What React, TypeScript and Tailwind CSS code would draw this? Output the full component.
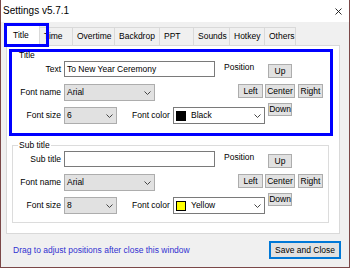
import React from 'react';

const Chevron = () => (
  <svg width="7" height="4" viewBox="0 0 7 4" className="shrink-0">
    <polyline points="0.5,0.5 3.5,3.5 6.5,0.5" fill="none" stroke="#444444" strokeWidth="1" />
  </svg>
);

const Btn = ({ label, className }: { label: string; className: string }) => (
  <div className={`flex items-center justify-center bg-[#e1e1e1] border border-[#adadad] ${className}`}>
    {label}
  </div>
);

interface GroupProps {
  title: string;
  first: string;
  value: string;
  size: string;
  colorName: string;
  swatch: string;
  frame: string;
  legend: string;
}

const Group: React.FC<GroupProps> = ({ title, first, value, size, colorName, swatch, frame, legend }) => (
  <div className={`relative border pt-[5px] pb-[8px] ${frame}`}>
    <span className={`absolute -top-[5px] left-[5px] px-[1px] ${legend}`}>{title}</span>
    <div className="flex flex-col gap-[6px]">
      {/* Row 1 */}
      <div className="flex items-start h-[17px]">
        <span className="w-[48px] text-right leading-[16px]">{first}</span>
        <div className="ml-[3px] w-[151px] h-[16px] bg-white border border-[#7a7a7a] pl-[2px] leading-[14px]">
          {value}
        </div>
        <span className="ml-[9px] w-[44px] mt-[2px]">Position</span>
        <Btn label="Up" className="w-[24px] h-[14px] mt-[3px]" />
      </div>

      {/* Row 2 */}
      <div className="flex items-start h-[17px]">
        <span className="w-[48px] text-right leading-[17px]">Font name</span>
        <div className="ml-[3px] w-[91px] h-[17px] bg-[#e1e1e1] border border-[#adadad] flex items-center justify-between pl-[2px] pr-[3px]">
          <span>Arial</span>
          <Chevron />
        </div>
        <div className="ml-[83px] flex items-start">
          <Btn label="Left" className="w-[25px] h-[14px]" />
          <Btn label="Center" className="ml-[2px] w-[30px] h-[14px]" />
          <Btn label="Right" className="ml-[3px] w-[25px] h-[14px]" />
        </div>
      </div>

      {/* Row 3 */}
      <div className="flex items-start h-[17px]">
        <span className="w-[48px] text-right leading-[17px]">Font size</span>
        <div className="ml-[3px] w-[53px] h-[17px] bg-[#e1e1e1] border border-[#adadad] flex items-center justify-between pl-[2px] pr-[3px]">
          <span>{size}</span>
          <Chevron />
        </div>
        <span className="ml-[15px] w-[41px] leading-[17px]">Font color</span>
        <div className="w-[92px] h-[17px] bg-white border border-[#7a7a7a] flex items-center pl-[2px] pr-[3px]">
          <span className={`w-[10px] h-[10px] border border-black ${swatch}`} />
          <span className="ml-[5px] flex-1">{colorName}</span>
          <Chevron />
        </div>
        <Btn label="Down" className="ml-[3px] -mt-[4px] w-[24px] h-[13px]" />
      </div>
    </div>
  </div>
);

const tabs = [
  { label: 'Time', w: 'w-[33px]' },
  { label: 'Overtime', w: 'w-[42px]' },
  { label: 'Backdrop', w: 'w-[45px]' },
  { label: 'PPT', w: 'w-[34px]' },
  { label: 'Sounds', w: 'w-[36px]' },
  { label: 'Hotkey', w: 'w-[35px]' },
  { label: 'Others', w: 'w-[31px]' },
];

export default function App() {
  return (
    <div className="w-[350px] h-[268px] flex flex-col bg-[#f0f0f0] border-x border-b border-[#7b4848] text-[8.5px] leading-[9px] text-black font-['Liberation_Sans',Arial,sans-serif] overflow-hidden">
      {/* Title bar */}
      <div className="h-[22px] shrink-0 bg-white flex items-center justify-between pl-[2px] pr-[7px]">
        <span className="text-[10px] leading-[12px]">Settings v5.7.1</span>
        <svg width="7" height="7" viewBox="0 0 7 7">
          <path d="M0.5 0.5 L6.5 6.5 M6.5 0.5 L0.5 6.5" stroke="#111111" strokeWidth="0.9" />
        </svg>
      </div>

      {/* Tabs */}
      <div className="h-[23px] shrink-0 flex items-end pl-[5px]">
        <div className="relative z-10 -mb-[1px] w-[34px] h-[22px] bg-white border-x border-t border-[#d9d9d9] flex items-center pl-[6px]">
          Title
          <div className="absolute -left-[3px] -top-[2px] w-[45px] h-[24px] border-[3px] border-[#0000ff]" />
        </div>
        {tabs.map((t) => (
          <div
            key={t.label}
            className={`${t.w} h-[18px] bg-[#f0f0f0] border-t border-r border-[#d9d9d9] flex items-center pl-[4px]`}
          >
            {t.label}
          </div>
        ))}
      </div>

      {/* Tab panel */}
      <div className="ml-[5px] mr-[9px] h-[189px] shrink-0 bg-white border border-[#d9d9d9] pt-[3px] pl-[2px] pr-[6px] flex flex-col">
        <div className="border-[3px] border-[#0000ff] pt-[3px] pr-[1px]">
          <Group
            title="Title"
            first="Text"
            value="To New Year Ceremony"
            size="6"
            colorName="Black"
            swatch="bg-black"
            frame="border-transparent"
            legend="bg-transparent"
          />
        </div>
        <div className="mt-[9px] ml-[3px] mr-[4px]">
          <Group
            title="Sub title"
            first="Sub title"
            value=""
            size="8"
            colorName="Yellow"
            swatch="bg-[#ffff00]"
            frame="border-[#dcdcdc]"
            legend="bg-white"
          />
        </div>
      </div>

      {/* Footer */}
      <div className="flex-1 flex items-center justify-between pl-[12px] pr-[8px] pb-[1px]">
        <span className="text-[#3030d0]">Drag to adjust positions after close this window</span>
        <div className="w-[72px] h-[18px] flex items-center justify-center bg-[#e1e1e1] border-2 border-[#0078d7]">
          Save and Close
        </div>
      </div>
    </div>
  );
}
